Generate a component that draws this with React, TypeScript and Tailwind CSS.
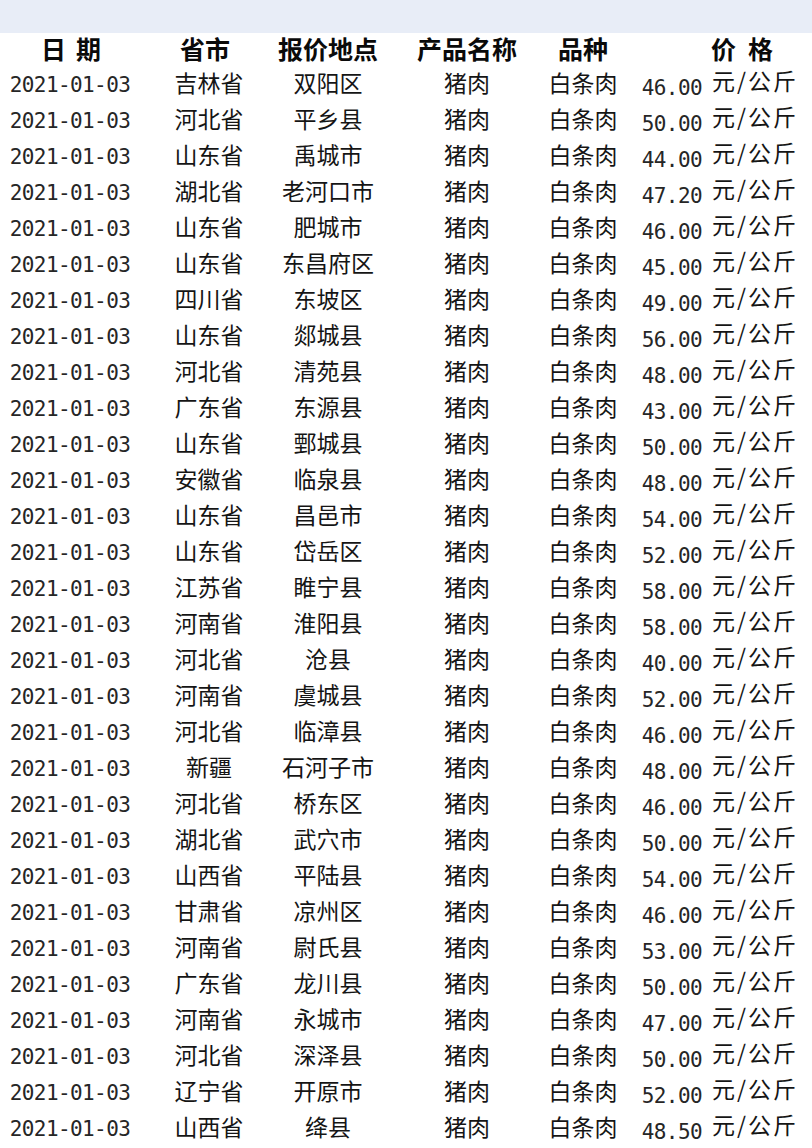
import React from "react";

const rows: [string, string, string][] = [
  ["吉林省", "双阳区", "46.00"],
  ["河北省", "平乡县", "50.00"],
  ["山东省", "禹城市", "44.00"],
  ["湖北省", "老河口市", "47.20"],
  ["山东省", "肥城市", "46.00"],
  ["山东省", "东昌府区", "45.00"],
  ["四川省", "东坡区", "49.00"],
  ["山东省", "郯城县", "56.00"],
  ["河北省", "清苑县", "48.00"],
  ["广东省", "东源县", "43.00"],
  ["山东省", "鄄城县", "50.00"],
  ["安徽省", "临泉县", "48.00"],
  ["山东省", "昌邑市", "54.00"],
  ["山东省", "岱岳区", "52.00"],
  ["江苏省", "睢宁县", "58.00"],
  ["河南省", "淮阳县", "58.00"],
  ["河北省", "沧县", "40.00"],
  ["河南省", "虞城县", "52.00"],
  ["河北省", "临漳县", "46.00"],
  ["新疆", "石河子市", "48.00"],
  ["河北省", "桥东区", "46.00"],
  ["湖北省", "武穴市", "50.00"],
  ["山西省", "平陆县", "54.00"],
  ["甘肃省", "凉州区", "46.00"],
  ["河南省", "尉氏县", "53.00"],
  ["广东省", "龙川县", "50.00"],
  ["河南省", "永城市", "47.00"],
  ["河北省", "深泽县", "50.00"],
  ["辽宁省", "开原市", "52.00"],
  ["山西省", "绛县", "48.50"],
];

const cjk = "font-['Noto_Sans_CJK_SC',sans-serif]";
const mono = "font-['DejaVu_Sans_Mono','Liberation_Mono',monospace]";

export default function App() {
  return (
    <div className="w-[812px] h-[1148px] bg-white overflow-hidden text-[#151515]">
      <div className="h-[33px] bg-[#e8edf7]" />
      <div className={`flex h-[34px] items-center pb-[4px] text-[25px] font-bold leading-none ${cjk} text-[#0a0a0a]`}>
        <div className="w-[140px] flex justify-center gap-[10px] pl-[2px]">
          <span>日</span>
          <span>期</span>
        </div>
        <div className="w-[138px] flex justify-center pr-[8px]">省市</div>
        <div className="w-[100px] flex justify-center">报价地点</div>
        <div className="w-[178px] flex justify-center">产品名称</div>
        <div className="w-[54px] flex justify-center">品种</div>
        <div className="w-[101px]" />
        <div className="flex gap-[12px]">
          <span>价</span>
          <span>格</span>
        </div>
      </div>
      {rows.map(([prov, place, price], i) => (
        <div key={i} className="flex h-[36px] items-center text-[23px] leading-none">
          <div className={`w-[140px] flex justify-center ${mono} text-[21px] tracking-[-0.6px] text-[#262626]`}>2021-01-03</div>
          <div className={`w-[138px] flex justify-center whitespace-nowrap pb-[5px] ${cjk}`}>{prov}</div>
          <div className={`w-[100px] flex justify-center whitespace-nowrap pb-[5px] ${cjk}`}>{place}</div>
          <div className={`w-[178px] flex justify-center whitespace-nowrap pb-[5px] ${cjk}`}>猪肉</div>
          <div className={`w-[54px] flex justify-center whitespace-nowrap pb-[5px] ${cjk}`}>白条肉</div>
          <div className={`w-[92px] flex justify-end ${mono} text-[21px] tracking-[-0.6px] text-[#262626] pt-[6px]`}>{price}</div>
          <div className={`ml-[10px] whitespace-nowrap tracking-[2px] ${cjk} pb-[9px]`}>元/公斤</div>
        </div>
      ))}
    </div>
  );
}
